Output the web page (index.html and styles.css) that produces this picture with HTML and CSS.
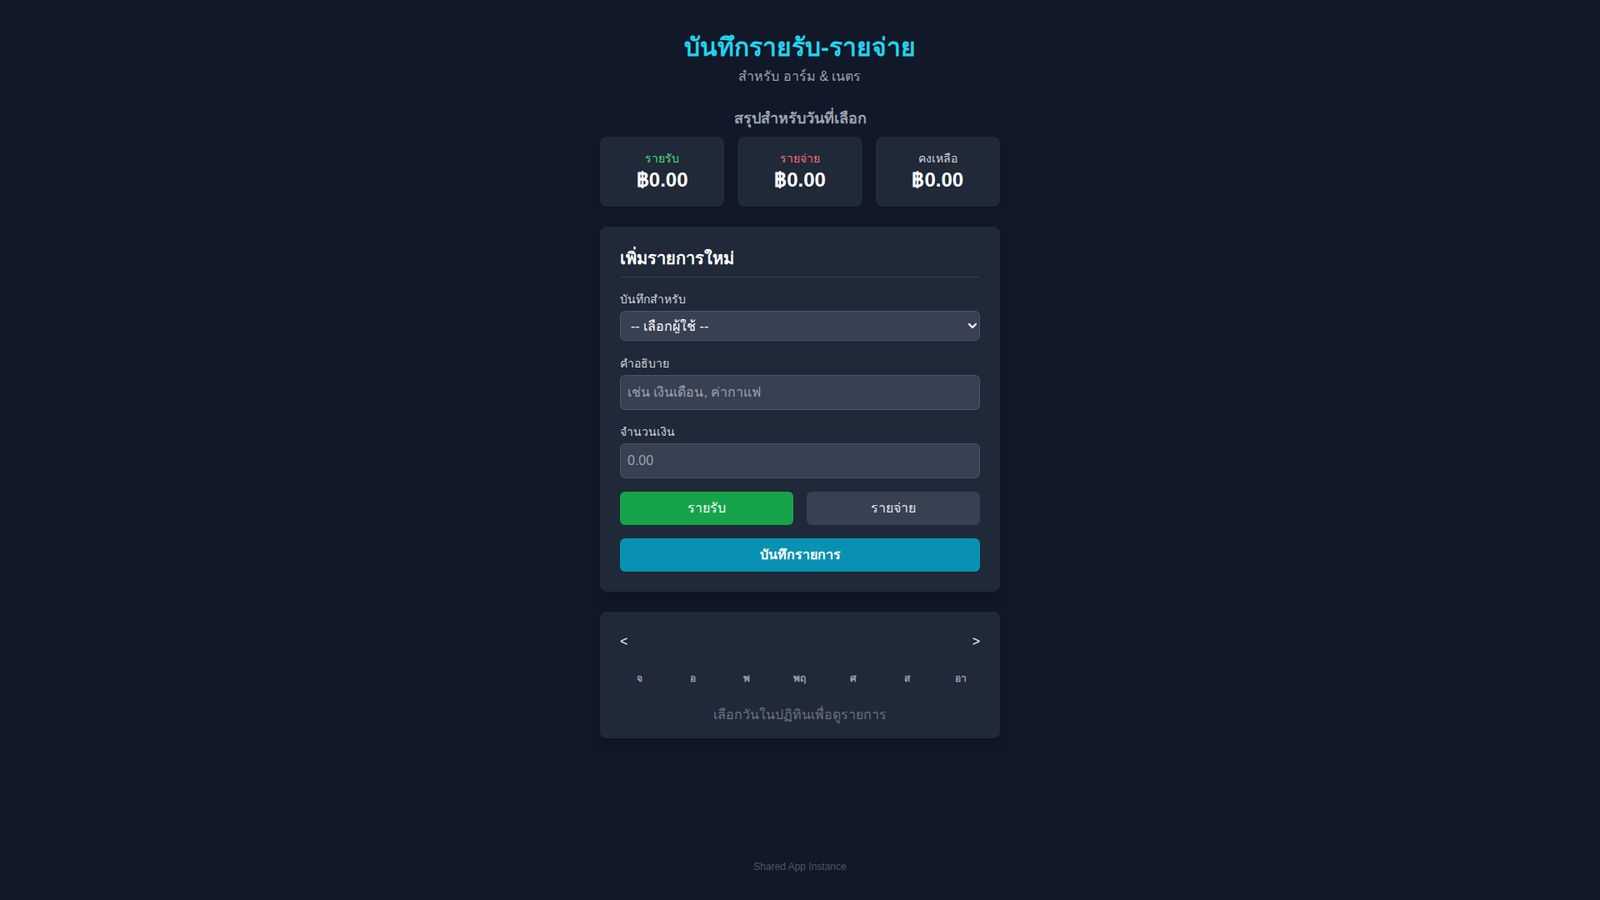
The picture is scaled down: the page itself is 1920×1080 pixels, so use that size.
FILE: index.html
```html
<!DOCTYPE html>
<html lang="th">
<head>
<meta charset="utf-8">
<title>บันทึกรายรับ-รายจ่าย</title>
<link rel="stylesheet" href="styles.css">
</head>
<body>
<main class="container">
  <header class="header">
    <h1 class="title">บันทึกรายรับ-รายจ่าย</h1>
    <p class="subtitle">สำหรับ อาร์ม &amp; เนตร</p>
  </header>

  <section class="summary">
    <h2 class="summary-title">สรุปสำหรับวันที่เลือก</h2>
    <div class="summary-grid">
      <div class="sum-card">
        <div class="sum-label income">รายรับ</div>
        <div class="sum-amount">฿0.00</div>
      </div>
      <div class="sum-card">
        <div class="sum-label expense">รายจ่าย</div>
        <div class="sum-amount">฿0.00</div>
      </div>
      <div class="sum-card">
        <div class="sum-label balance">คงเหลือ</div>
        <div class="sum-amount">฿0.00</div>
      </div>
    </div>
  </section>

  <section class="panel form-panel">
    <h2 class="panel-title">เพิ่มรายการใหม่</h2>
    <div class="field">
      <label class="field-label">บันทึกสำหรับ</label>
      <div class="select-wrap">
        <select class="select">
          <option>-- เลือกผู้ใช้ --</option>
        </select>
        <svg class="chev" width="12" height="12" viewBox="0 0 12 12"><path d="M2 4 L6 8 L10 4" fill="none" stroke="#ffffff" stroke-width="2.2" stroke-linecap="round" stroke-linejoin="round"/></svg>
      </div>
    </div>
    <div class="field">
      <label class="field-label">คำอธิบาย</label>
      <input class="input" type="text" placeholder="เช่น เงินเดือน, ค่ากาแฟ">
    </div>
    <div class="field">
      <label class="field-label">จำนวนเงิน</label>
      <input class="input" type="text" placeholder="0.00">
    </div>
    <div class="type-row">
      <button class="btn btn-income">รายรับ</button>
      <button class="btn btn-expense">รายจ่าย</button>
    </div>
    <button class="btn btn-save">บันทึกรายการ</button>
  </section>

  <section class="panel cal-panel">
    <div class="cal-head">
      <button class="nav-btn">&lt;</button>
      <button class="nav-btn">&gt;</button>
    </div>
    <div class="cal-days">
      <div>จ</div><div>อ</div><div>พ</div><div>พฤ</div><div>ศ</div><div>ส</div><div>อา</div>
    </div>
    <p class="cal-msg">เลือกวันในปฏิทินเพื่อดูรายการ</p>
  </section>
</main>
<footer class="footer">Shared App Instance</footer>
</body>
</html>
```

FILE: styles.css
```css
* { box-sizing: border-box; }
html, body { margin: 0; padding: 0; }
body {
  background: #111827;
  color: #f3f4f6;
  font-family: "Liberation Sans", Arial, sans-serif;
  min-height: 100vh;
  display: flex;
  flex-direction: column;
}
.container {
  width: 480px;
  margin: 0 auto;
  padding-top: 39px;
}
.header { text-align: center; margin-bottom: 24px; }
.title {
  margin: 0;
  font-size: 30px;
  line-height: 36px;
  font-weight: 700;
  color: #22d3ee;
}
.subtitle {
  margin: 5px 0 0;
  font-size: 16px;
  line-height: 24px;
  color: #9ca3af;
}
.summary { margin-bottom: 24px; }
.summary-title {
  margin: 0 0 8px;
  text-align: center;
  font-size: 18px;
  line-height: 28px;
  font-weight: 600;
  color: #9ca3af;
}
.summary-grid {
  display: grid;
  grid-template-columns: repeat(3, 1fr);
  gap: 16px;
}
.sum-card {
  background: #1f2937;
  border-radius: 8px;
  padding: 16px;
  text-align: center;
  box-shadow: 0 4px 6px rgba(0,0,0,0.1);
}
.sum-label { font-size: 14px; line-height: 20px; }
.sum-label.income { color: #4ade80; }
.sum-label.expense { color: #f87171; }
.sum-label.balance { color: #d1d5db; }
.sum-amount {
  font-size: 24px;
  line-height: 32px;
  font-weight: 700;
  color: #ffffff;
}
.panel {
  background: #1f2937;
  border-radius: 8px;
  box-shadow: 0 10px 15px rgba(0,0,0,0.15);
}
.form-panel { padding: 24px; margin-bottom: 24px; }
.panel-title {
  margin: 0 0 16px;
  padding-bottom: 8px;
  border-bottom: 1px solid #374151;
  font-size: 20px;
  line-height: 28px;
  font-weight: 700;
  color: #ffffff;
}
.field { margin-bottom: 16px; }
.field-label {
  display: block;
  font-size: 14px;
  line-height: 20px;
  color: #d1d5db;
  margin-bottom: 4px;
}
.select-wrap { position: relative; padding-bottom: 1px; }
.select {
  display: block;
  appearance: none;
  -webkit-appearance: none;
  width: 100%;
  height: 36px;
  padding: 0 28px 0 12px;
  background: #374151;
  border: 1px solid #4b5563;
  border-radius: 6px;
  color: #ffffff;
  font-family: inherit;
  font-size: 16px;
}
.chev {
  position: absolute;
  right: 3px;
  top: 12px;
  pointer-events: none;
}
.input {
  display: block;
  width: 100%;
  height: 42px;
  padding: 8px;
  background: #374151;
  border: 1px solid #4b5563;
  border-radius: 6px;
  color: #ffffff;
  font-family: inherit;
  font-size: 16px;
  line-height: 24px;
}
.input::placeholder { color: #9ca3af; }
.type-row {
  display: grid;
  grid-template-columns: 1fr 1fr;
  gap: 16px;
  margin-bottom: 16px;
}
.btn {
  display: block;
  width: 100%;
  height: 40px;
  border: none;
  border-radius: 6px;
  color: #ffffff;
  font-family: inherit;
  font-size: 16px;
  line-height: 24px;
  padding: 8px 16px;
}
.btn-income { background: #16a34a; }
.btn-expense { background: #374151; color: #e5e7eb; }
.btn-save { background: #0891b2; font-weight: 700; }
.cal-panel { padding: 16px; }
.cal-head {
  display: flex;
  justify-content: space-between;
  align-items: center;
  margin-bottom: 16px;
}
.nav-btn {
  background: none;
  border: none;
  color: #ffffff;
  font-family: inherit;
  font-size: 16px;
  line-height: 24px;
  padding: 8px;
}
.cal-days {
  display: grid;
  grid-template-columns: repeat(7, 1fr);
  gap: 2px;
  text-align: center;
  font-size: 12px;
  line-height: 16px;
  font-weight: 600;
  color: #9ca3af;
}
.cal-msg {
  margin: 24px 0 0;
  text-align: center;
  font-size: 16px;
  line-height: 24px;
  color: #6b7280;
}
.footer {
  margin-top: auto;
  padding: 16px 0 32px;
  text-align: center;
  font-size: 12px;
  line-height: 16px;
  color: #4b5563;
}
```
